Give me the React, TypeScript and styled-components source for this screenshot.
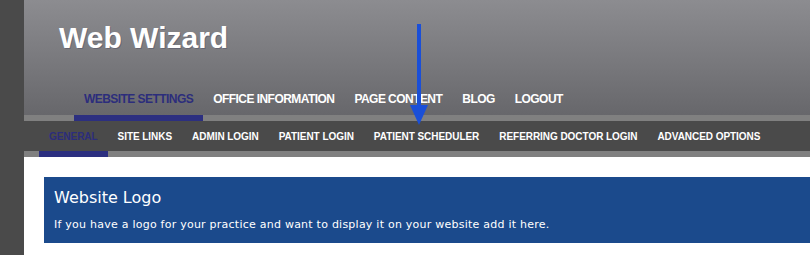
import React from "react";
import styled, { createGlobalStyle } from "styled-components";

const GlobalStyle = createGlobalStyle`
  html, body {
    margin: 0;
    padding: 0;
    background: #4a4a4a;
    overflow: hidden;
  }
  body {
    font-family: "Liberation Sans", Arial, sans-serif;
  }
`;

const Page = styled.div`
  position: relative;
  display: flex;
  min-height: 255px;
  width: 810px;
`;

const Sidebar = styled.div`
  width: 24px;
  flex-shrink: 0;
  background: #4a4a4a;
`;

const Main = styled.div`
  flex: 1;
  display: flex;
  flex-direction: column;
  background: #ffffff;
`;

const Header = styled.header`
  background: linear-gradient(to bottom, #8c8c90 0%, #7a7a7e 50%, #67676b 100%);
  border-bottom: 6px solid #808080;
`;

const Title = styled.h1`
  margin: 23px 0 0 35px;
  font-size: 30px;
  line-height: 30px;
  font-weight: bold;
  color: #ffffff;
  text-shadow: 1px 1px 0 rgba(60, 60, 90, 0.35);
`;

const NavRow = styled.nav`
  display: flex;
  margin: 31px 0 -6px 50px;
`;

const NavItem = styled.a<{ $active?: boolean }>`
  padding: 8px 10px 9px;
  font-size: 12px;
  line-height: 14px;
  font-weight: bold;
  letter-spacing: -0.55px;
  text-transform: uppercase;
  color: ${(p) => (p.$active ? "#2c2d7c" : "#ffffff")};
  border-bottom: 6px solid ${(p) => (p.$active ? "#2c2f80" : "transparent")};
  white-space: nowrap;
  cursor: pointer;
`;

const SubNav = styled.nav`
  display: flex;
  padding-left: 15px;
  background: #4a4a4a;
  border-bottom: 6px solid #808080;
`;

const SubRow = styled.div`
  display: flex;
  margin-bottom: -6px;
`;

const SubItem = styled.a<{ $active?: boolean }>`
  padding: 10px 10px 8px;
  font-size: 10px;
  line-height: 12px;
  font-weight: bold;
  letter-spacing: -0.05px;
  text-transform: uppercase;
  color: ${(p) => (p.$active ? "#2c2d7c" : "#ffffff")};
  border-bottom: 6px solid ${(p) => (p.$active ? "#2c2f80" : "transparent")};
  white-space: nowrap;
  cursor: pointer;
`;

const Content = styled.section`
  padding: 20px 0 0 20px;
`;

const Panel = styled.div`
  height: 66px;
  box-sizing: border-box;
  padding: 11px 0 0 10px;
  background: #1b4a8c;
  color: #ffffff;
  font-family: "DejaVu Sans", Verdana, sans-serif;
`;

const PanelTitle = styled.h2`
  margin: 0;
  font-size: 16px;
  line-height: 20px;
  font-weight: normal;
`;

const PanelText = styled.p`
  margin: 10px 0 0;
  font-size: 11px;
  line-height: 14px;
  letter-spacing: 0.24px;
`;

const Arrow = styled.svg`
  position: absolute;
  left: 409px;
  top: 24px;
`;

const mainNav = ["Website Settings", "Office Information", "Page Content", "Blog", "Logout"];
const subNav = [
  "General",
  "Site Links",
  "Admin Login",
  "Patient Login",
  "Patient Scheduler",
  "Referring Doctor Login",
  "Advanced Options",
];

export default function App() {
  return (
    <>
      <GlobalStyle />
      <Page>
        <Sidebar />
        <Main>
          <Header>
            <Title>Web Wizard</Title>
            <NavRow>
              {mainNav.map((label, i) => (
                <NavItem key={label} $active={i === 0}>
                  {label}
                </NavItem>
              ))}
            </NavRow>
          </Header>
          <SubNav>
            <SubRow>
              {subNav.map((label, i) => (
                <SubItem key={label} $active={i === 0}>
                  {label}
                </SubItem>
              ))}
            </SubRow>
          </SubNav>
          <Content>
            <Panel>
              <PanelTitle>Website Logo</PanelTitle>
              <PanelText>
                If you have a logo for your practice and want to display it on your website add it here.
              </PanelText>
            </Panel>
          </Content>
        </Main>
        <Arrow width="20" height="101" viewBox="0 0 20 101">
          <rect x="8" y="0" width="4" height="84" fill="#1a4fd8" />
          <polygon points="1,81 19,81 10,101" fill="#1a4fd8" />
        </Arrow>
      </Page>
    </>
  );
}
